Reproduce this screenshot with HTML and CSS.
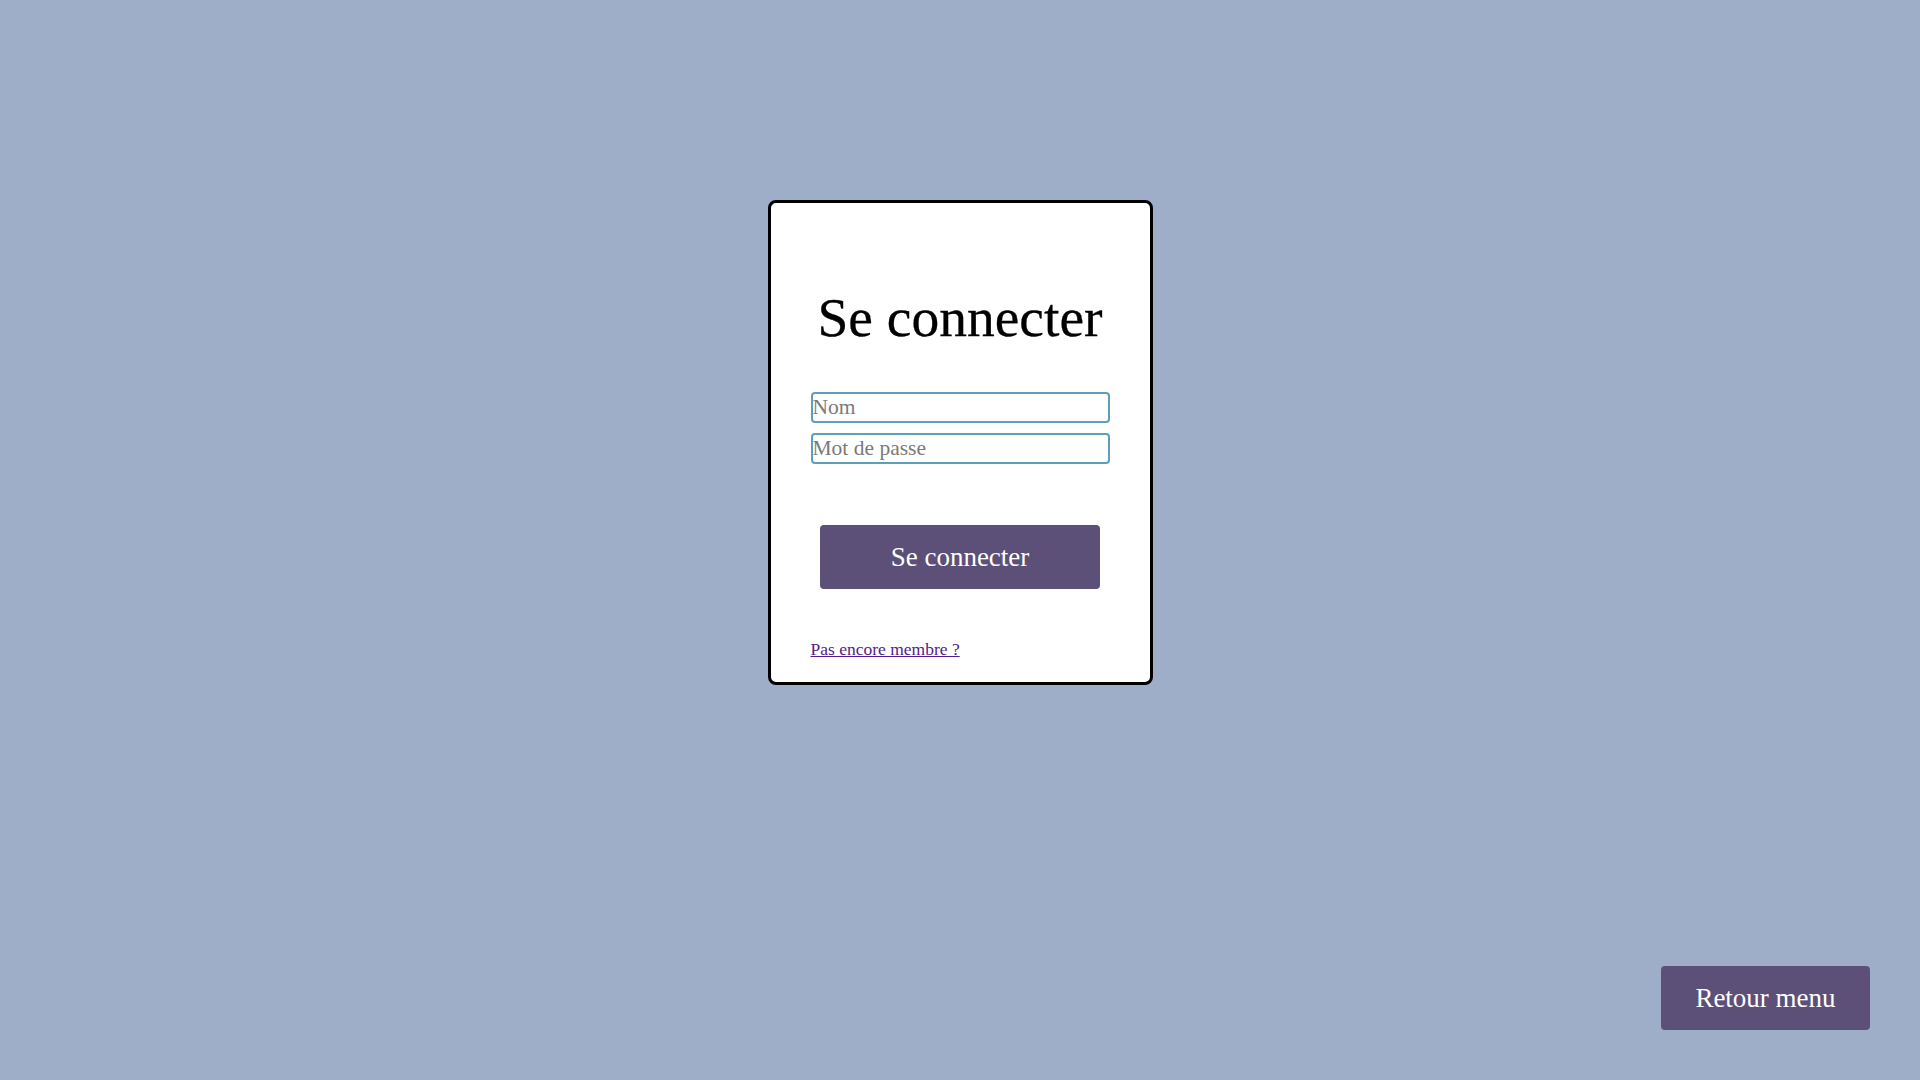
FILE: index.html
```html
<!DOCTYPE html>
<html lang="fr">
<head>
<meta charset="utf-8">
<title>Se connecter</title>
<link rel="stylesheet" href="styles.css">
</head>
<body>
<main class="page">
  <form class="card">
    <h1 class="card-title">Se connecter</h1>
    <div class="fields">
      <input class="field" type="text" placeholder="Nom">
      <input class="field" type="password" placeholder="Mot de passe">
    </div>
    <button class="btn btn-login" type="button">Se connecter</button>
    <a class="signup-link" href="#">Pas encore membre ?</a>
  </form>
</main>
<button class="btn btn-back" type="button">Retour menu</button>
</body>
</html>
```
FILE: styles.css
```css
html, body {
  margin: 0;
  padding: 0;
  height: 100%;
}
body {
  background: #9eaec8;
  font-family: "Liberation Serif", "Times New Roman", serif;
}
.page {
  display: flex;
  justify-content: center;
  padding-top: 200px;
}
.card {
  width: 385px;
  box-sizing: border-box;
  background: #fff;
  border: 3px solid #000;
  border-radius: 8px;
  padding: 84px 40px 23px;
  display: flex;
  flex-direction: column;
}
.card-title {
  margin: 0;
  font-size: 55.5px;
  font-weight: normal;
  line-height: 62px;
  text-align: center;
  color: #000;
  -webkit-text-stroke: 0.3px #000;
}
.fields {
  margin-top: 43px;
  display: flex;
  flex-direction: column;
  gap: 10px;
}
.field {
  box-sizing: border-box;
  width: 100%;
  height: 31px;
  border: 2px solid #5b9fb8;
  border-radius: 4px;
  padding: 0;
  font-family: "Liberation Serif", serif;
  font-size: 21.5px;
  color: #333;
  background: #fff;
  outline: none;
}
.field::placeholder {
  color: #7a7a7a;
}
.btn {
  background: #5c5079;
  color: #fff;
  border: none;
  border-radius: 4px;
  font-family: "Liberation Serif", serif;
  font-size: 27px;
  height: 64px;
  padding: 0;
  cursor: pointer;
}
.btn-login {
  width: 280px;
  align-self: center;
  margin-top: 61px;
}
.signup-link {
  margin-top: 50px;
  font-size: 17.5px;
  line-height: 20px;
  color: #551a8b;
  align-self: flex-start;
}
.btn-back {
  position: fixed;
  right: 50px;
  bottom: 50px;
  width: 209px;
}
```
